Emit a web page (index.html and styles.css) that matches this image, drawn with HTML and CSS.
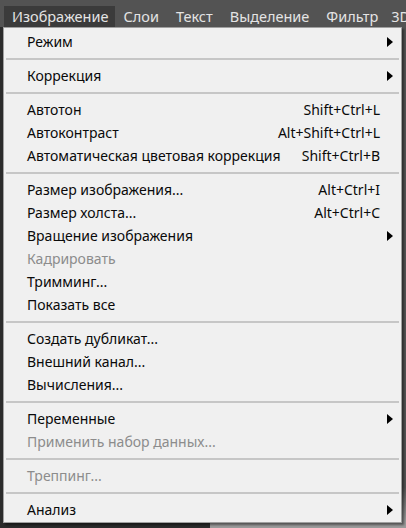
FILE: index.html
```html
<!DOCTYPE html>
<html lang="ru">
<head>
<meta charset="utf-8">
<title>Изображение</title>
<link rel="stylesheet" href="styles.css">
</head>
<body>
<div class="app">
  <nav class="menubar">
    <span class="mb-item active">Изображение</span>
    <span class="mb-item">Слои</span>
    <span class="mb-item">Текст</span>
    <span class="mb-item">Выделение</span>
    <span class="mb-item">Фильтр</span>
    <span class="mb-item last">3D</span>
  </nav>
  <div class="workspace">
    <div class="ws-left"></div>
    <div class="ws-right"></div>
  </div>

  <div class="menu">
    <div class="row sub"><span class="label">Режим</span><span class="key"></span><span class="arrow"></span></div>
    <div class="sep"></div>
    <div class="row sub"><span class="label">Коррекция</span><span class="key"></span><span class="arrow"></span></div>
    <div class="sep"></div>
    <div class="row"><span class="label">Автотон</span><span class="key">Shift+Ctrl+L</span><span class="arrow"></span></div>
    <div class="row"><span class="label">Автоконтраст</span><span class="key">Alt+Shift+Ctrl+L</span><span class="arrow"></span></div>
    <div class="row"><span class="label">Автоматическая цветовая коррекция</span><span class="key">Shift+Ctrl+B</span><span class="arrow"></span></div>
    <div class="sep"></div>
    <div class="row"><span class="label">Размер изображения...</span><span class="key">Alt+Ctrl+I</span><span class="arrow"></span></div>
    <div class="row"><span class="label">Размер холста...</span><span class="key">Alt+Ctrl+C</span><span class="arrow"></span></div>
    <div class="row sub"><span class="label">Вращение изображения</span><span class="key"></span><span class="arrow"></span></div>
    <div class="row disabled"><span class="label">Кадрировать</span><span class="key"></span><span class="arrow"></span></div>
    <div class="row"><span class="label">Тримминг...</span><span class="key"></span><span class="arrow"></span></div>
    <div class="row"><span class="label">Показать все</span><span class="key"></span><span class="arrow"></span></div>
    <div class="sep"></div>
    <div class="row"><span class="label">Создать дубликат...</span><span class="key"></span><span class="arrow"></span></div>
    <div class="row"><span class="label">Внешний канал...</span><span class="key"></span><span class="arrow"></span></div>
    <div class="row"><span class="label">Вычисления...</span><span class="key"></span><span class="arrow"></span></div>
    <div class="sep"></div>
    <div class="row sub"><span class="label">Переменные</span><span class="key"></span><span class="arrow"></span></div>
    <div class="row disabled"><span class="label">Применить набор данных...</span><span class="key"></span><span class="arrow"></span></div>
    <div class="sep"></div>
    <div class="row disabled"><span class="label">Треппинг...</span><span class="key"></span><span class="arrow"></span></div>
    <div class="sep"></div>
    <div class="row sub"><span class="label">Анализ</span><span class="key"></span><span class="arrow"></span></div>
  </div>
</div>
</body>
</html>
```

FILE: styles.css
```css
html, body {
  margin: 0;
  padding: 0;
}

body {
  width: 406px;
  height: 528px;
  overflow: hidden;
  background: #2b2b2b;
  font-family: "Noto Sans", "Open Sans", sans-serif;
  font-size: 14px;
}

.app {
  position: relative;
  width: 406px;
  height: 528px;
  display: flex;
  flex-direction: column;
  overflow: hidden;
}

/* top menu bar */
.menubar {
  height: 27px;
  flex: none;
  background: #535353;
  display: flex;
  align-items: flex-end;
  padding-left: 4px;
  box-sizing: border-box;
  white-space: nowrap;
  overflow: hidden;
}

.mb-item {
  height: 21px;
  line-height: 20px;
  padding: 0 8px 0 9px;
  color: #e4e4e4;
  font-size: 14.5px;
}

.mb-item.active {
  background: #3b3b3b;
  padding: 0 6px 0 8px;
}

.mb-item.last {
  padding-left: 5px;
}

/* area behind the dropdown */
.workspace {
  flex: 1;
  display: flex;
}

.ws-left {
  width: 210px;
  background: #2b2b2b;
}

.ws-right {
  flex: 1;
  background: linear-gradient(to bottom, #535353 0, #535353 460px, #9a9a9a 495px);
}

/* dropdown menu */
.menu {
  position: absolute;
  left: 3px;
  top: 27px;
  width: 399px;
  box-sizing: border-box;
  background: #f0f0f0;
  border: 1px solid #a0a0a0;
  padding: 2px 0 1px;
  box-shadow: 2px 2px 2px rgba(0, 0, 0, 0.45);
  color: #0a0a0a;
}

.row {
  height: 23px;
  display: flex;
  align-items: center;
  padding-left: 23px;
  white-space: nowrap;
}

.label {
  flex: 1;
}

.key {
  text-align: right;
}

.arrow {
  width: 21px;
  height: 10px;
  flex: none;
  position: relative;
}

.sub .arrow::before {
  content: "";
  position: absolute;
  left: 7px;
  top: 0;
  border-left: 6px solid #000;
  border-top: 5px solid transparent;
  border-bottom: 5px solid transparent;
}

.disabled {
  color: #8c8c8c;
}

.sep {
  height: 2px;
  margin: 5px 2px 4px 2px;
  background: #c6c6c6;
}
```
